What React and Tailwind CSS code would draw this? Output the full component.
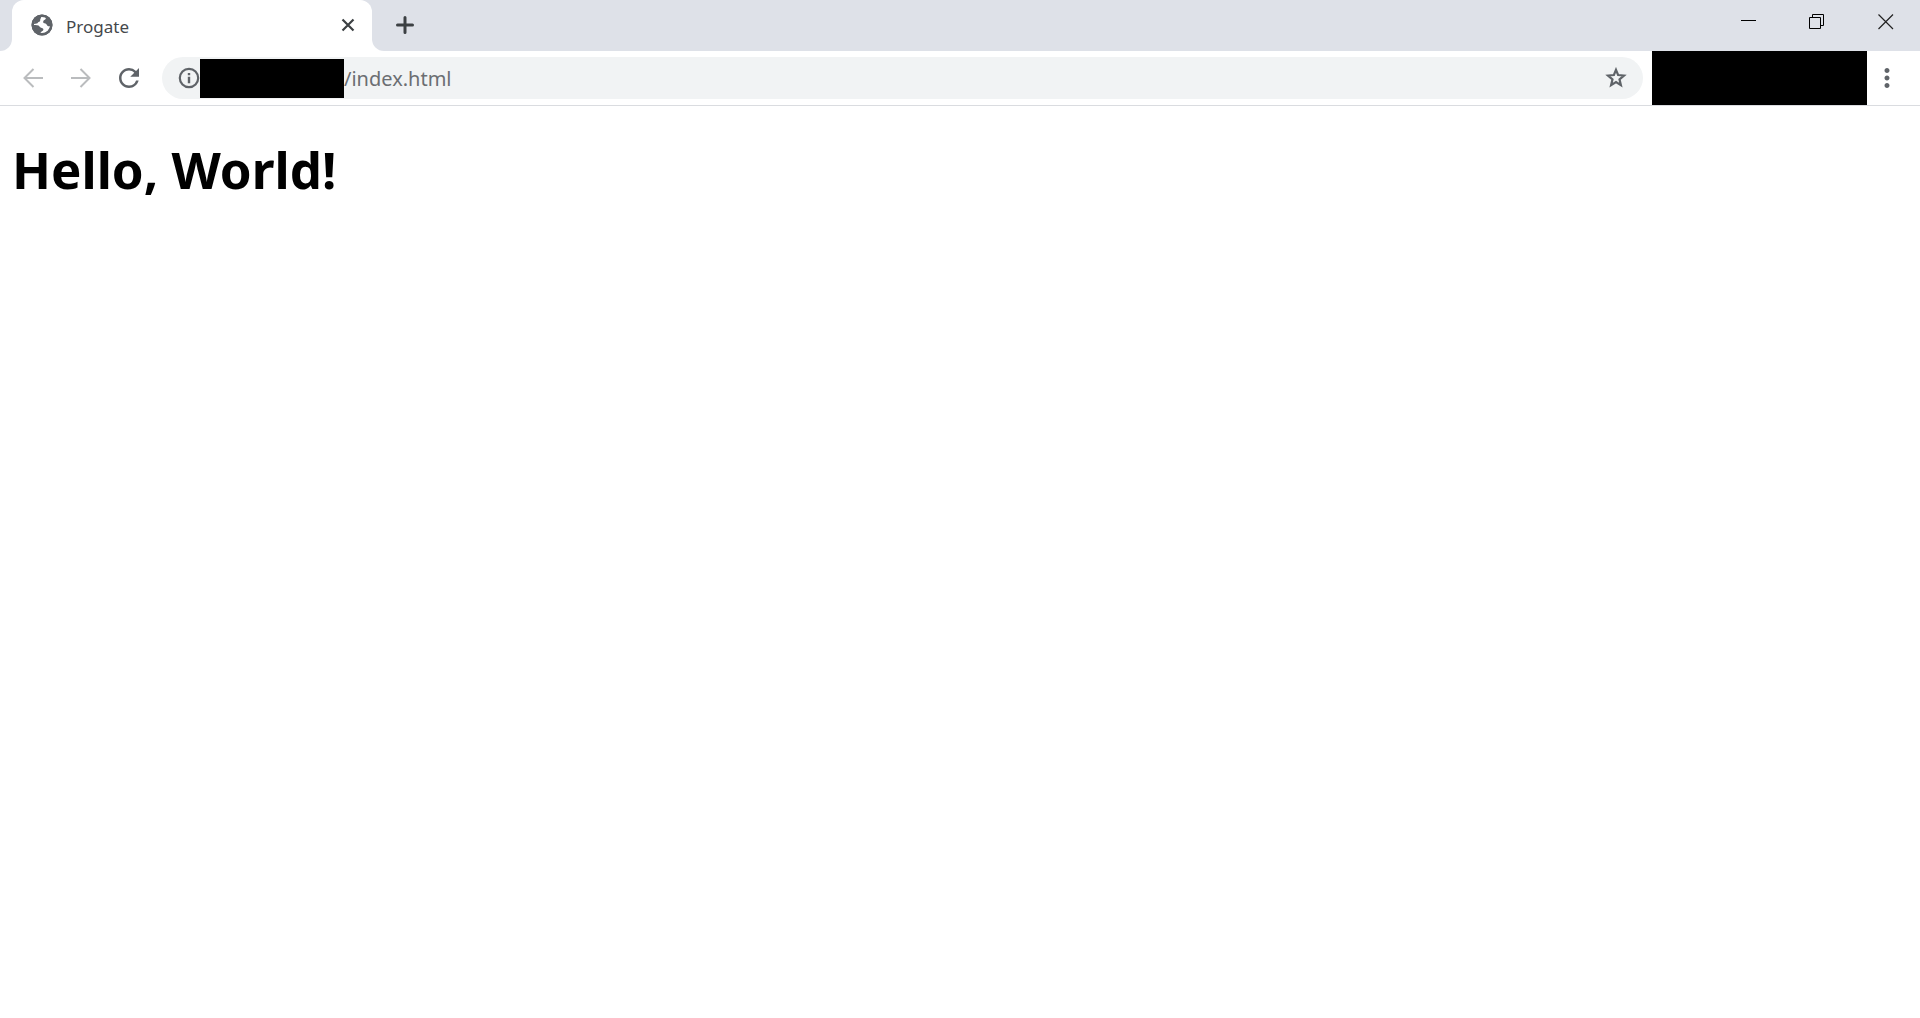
import { MdMoreVert, MdRefresh } from "react-icons/md";

function GlobeIcon() {
  return (
    <svg viewBox="0 0 22 22" className="size-[22px] shrink-0" aria-hidden="true">
      <circle cx="11" cy="11" r="10.5" fill="#5f6368" />
      <path
        d="M13 2.5 C15 3 15.4 4.6 14.2 5.6 C13 6.4 12 6.6 12.2 8.2 C12.4 9.4 15 9 15.8 10.8 C16.3 12.2 17.5 12.6 19.5 12 C18.5 15.5 16 18.5 12.5 19.4 L9.5 19.4 C9.3 17.4 12.2 17.6 12.4 15.6 C12.5 13.6 9.5 14 8.5 12.4 C7.6 11 5 11.2 2.5 11 C2.5 8.5 4 5.5 6.5 4 C8.5 3 10.5 2.2 13 2.5 Z"
        fill="#fff"
      />
      <path d="M3 10 C3 6 6 3 10 2.5 C10.5 4 9 4.8 9.2 6.4 C9.3 7.8 7.4 7.4 7 8.6 C6.6 9.8 5 9.8 3 10 Z" fill="#5f6368" />
      <circle cx="11" cy="11" r="9.3" fill="none" stroke="#5f6368" strokeWidth="2.4" />
    </svg>
  );
}

function ArrowIcon({ className }) {
  return (
    <svg viewBox="0 0 20 20" className={className} fill="none" stroke="currentColor" strokeWidth="2" aria-hidden="true">
      <path d="M20 10H2M10.5 1 1.5 10l9 9" />
    </svg>
  );
}

function InfoIcon() {
  return (
    <svg viewBox="0 0 22 22" className="size-[22px]" aria-hidden="true">
      <circle cx="11" cy="11" r="9.2" fill="none" stroke="currentColor" strokeWidth="2.2" />
      <path d="M9.8 6h2.4v2.2H9.8zM9.8 9.8h2.4v6.4H9.8z" fill="currentColor" />
    </svg>
  );
}

function StarIcon() {
  return (
    <svg viewBox="0 0 22 22" className="size-[22px]" fill="none" stroke="currentColor" strokeWidth="2.2" aria-hidden="true">
      <path d="M11 2.8l2.1 5.2 5.9.5-4.5 3.8 1.4 5.9-4.9-3.1-4.9 3.1 1.4-5.9L3 8.5l5.9-.5z" />
    </svg>
  );
}

function TabStrip() {
  return (
    <div className="flex h-[51px] justify-between bg-[#dee1e8]">
      <div className="flex">
        <div className="w-3 bg-white">
          <div className="h-full rounded-br-xl bg-[#dee1e8]"></div>
        </div>
        <div className="bg-[#dee1e8]">
          <div className="flex h-full w-[360px] items-center rounded-t-xl bg-white pb-px pl-[19px] pr-4">
            <GlobeIcon />
            <span className="ml-[13px] flex-1 pt-1 text-[17px] text-[#45484c]">Progate</span>
            <button aria-label="Close tab" className="text-[#3c4043]">
              <svg viewBox="0 0 16 16" className="size-4" stroke="currentColor" strokeWidth="2.2" aria-hidden="true">
                <path d="M2.5 2.5l11 11M13.5 2.5l-11 11" />
              </svg>
            </button>
          </div>
        </div>
        <div className="w-3 bg-white">
          <div className="h-full rounded-bl-xl bg-[#dee1e8]"></div>
        </div>
        <button aria-label="New tab" className="ml-[11px] pb-px text-[#3c4043]">
          <svg viewBox="0 0 20 20" className="size-5" stroke="currentColor" strokeWidth="3" strokeLinecap="round" aria-hidden="true">
            <path d="M10 2.5v15M2.5 10h15" />
          </svg>
        </button>
      </div>
      <div className="flex h-[43px] items-center gap-[53px] pr-[26px]">
        <button aria-label="Minimize">
          <svg viewBox="0 0 16 16" className="size-4" aria-hidden="true">
            <path d="M1 6h15v1H1z" />
          </svg>
        </button>
        <button aria-label="Restore">
          <svg viewBox="0 0 16 16" className="size-4" fill="none" stroke="#000" aria-hidden="true">
            <path d="M.5 3.5h11v11H.5zM3.5 3V.5h11v11H12" />
          </svg>
        </button>
        <button aria-label="Close">
          <svg viewBox="0 0 16 16" className="size-4" stroke="#222" strokeWidth="1.2" aria-hidden="true">
            <path d="M.5.5l14.5 14.5M15 .5l-14.5 14.5" />
          </svg>
        </button>
      </div>
    </div>
  );
}

function Toolbar() {
  return (
    <div className="flex h-[55px] items-center border-b border-[#dadce0] bg-white pl-[23px] text-[#5f6368]">
      <button aria-label="Back" className="text-[#babcbe]" disabled>
        <ArrowIcon className="size-5" />
      </button>
      <button aria-label="Forward" className="ml-7 text-[#babcbe]" disabled>
        <ArrowIcon className="size-5 rotate-180" />
      </button>
      <button aria-label="Reload" className="ml-[23px]">
        <MdRefresh size={30} />
      </button>
      <div className="ml-[18px] flex h-[42px] flex-1 items-center rounded-full bg-[#f1f3f4] pl-4 pr-4">
        <button aria-label="Site information">
          <InfoIcon />
        </button>
        <div className="h-[39px] w-36 shrink-0 bg-black"></div>
        <input
          aria-label="Address"
          defaultValue="/index.html"
          className="h-full min-w-0 flex-1 bg-transparent text-xl text-[#6b6e72] outline-none"
        />
        <button aria-label="Bookmark this page">
          <StarIcon />
        </button>
      </div>
      <div className="ml-[9px] h-full w-[215px] bg-black"></div>
      <button aria-label="Menu" className="ml-[5px] mr-[18px]">
        <MdMoreVert size={30} />
      </button>
    </div>
  );
}

function App() {
  return (
    <div className="min-h-screen bg-white font-['Noto_Sans',sans-serif]">
      <TabStrip />
      <Toolbar />
      <main className="px-3 pt-7">
        <h1 className="text-[51px] font-bold leading-[70px] text-black">Hello, World!</h1>
      </main>
    </div>
  );
}

export default App;
